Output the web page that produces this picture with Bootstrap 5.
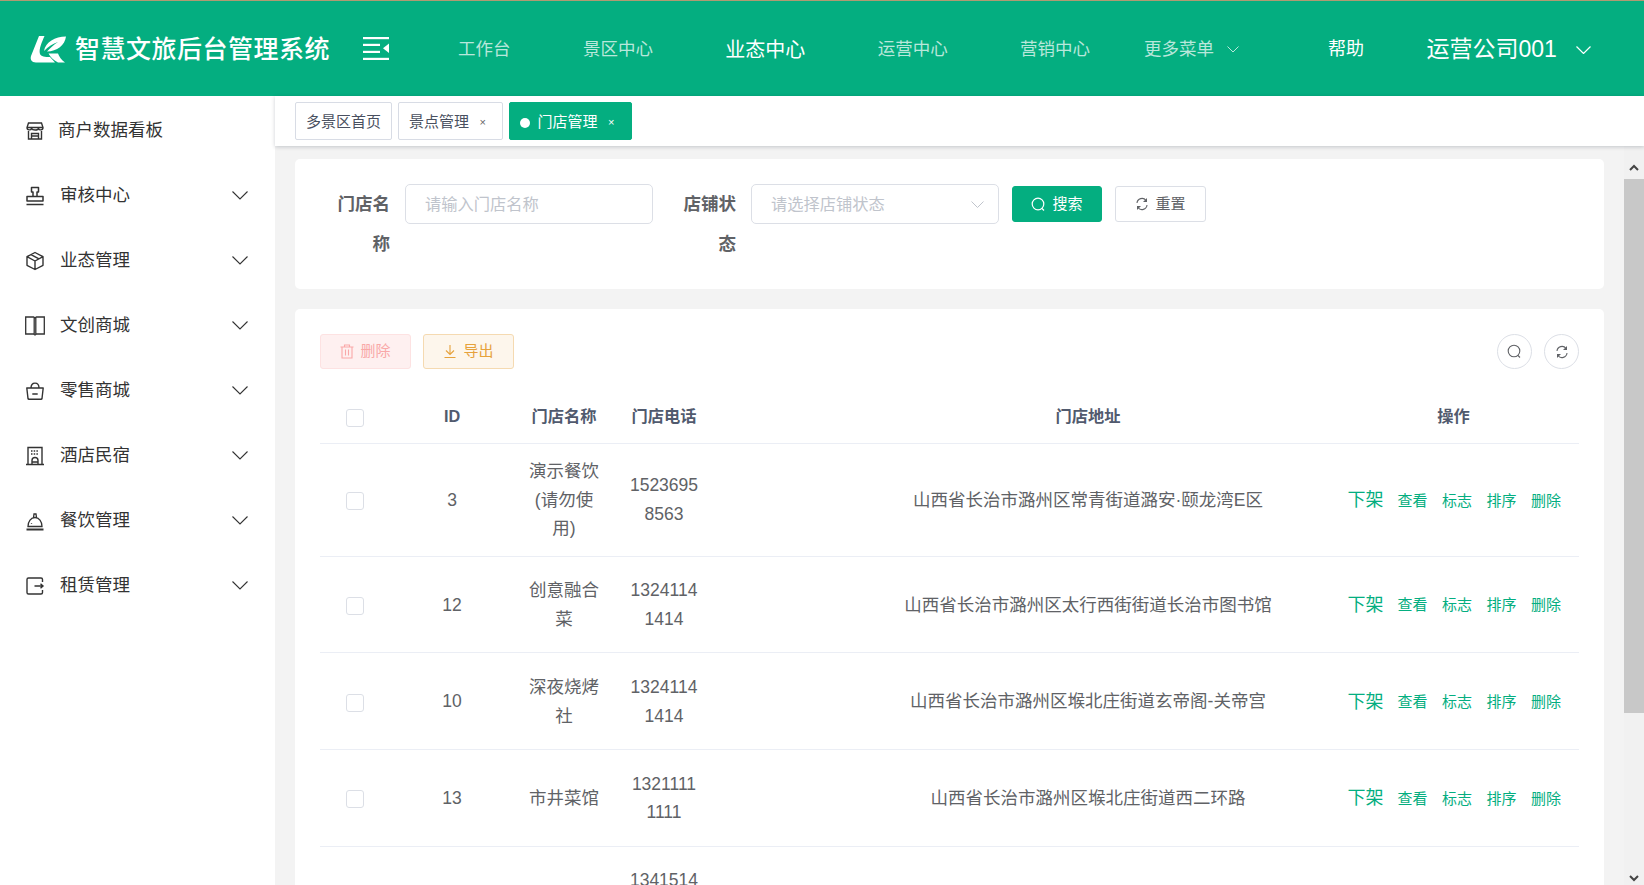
<!DOCTYPE html>
<html lang="zh-CN">
<head>
    <meta charset="UTF-8">
    <meta name="viewport" content="width=device-width, initial-scale=1.0">
    <title>智慧文旅后台管理系统</title>
    <link href="https://cdn.jsdelivr.net/npm/bootstrap@5.3.0/dist/css/bootstrap.min.css" rel="stylesheet">
    <style>
        html, body { height: 100%; }
        body {
            overflow: hidden;
            font-family: "Liberation Sans", "Noto Sans CJK SC", sans-serif;
            font-size: 17.5px;
            color: #606266;
            background: #f3f3f3;
        }
        svg { display: block; flex: none; }

        /* header */
        .top-bar {
            height: 96px;
            flex: none;
            background: #04ae80;
            border-top: 1px solid #b09a72;
            color: #fff;
        }
        .brand-logo { margin-left: 30px; }
        .brand-name { margin-left: 9px; width: 288px; font-size: 25px; font-weight: 500; letter-spacing: .5px; white-space: nowrap; }
        .top-links { margin-left: 69px; gap: 72.4px; }
        .top-links a { color: rgba(255, 255, 255, .72); text-decoration: none; white-space: nowrap; }
        .top-links a.is-on { color: #fff; font-size: 20px; }
        .top-links a.more-link { margin-left: -18.5px; gap: 13px; }
        .help-link { margin-left: 89px; font-size: 18px; }
        .user-link { margin-left: 62.5px; gap: 19px; font-size: 23px; }
        .brand-name, .top-links, .help-link, .user-link { padding-top: 2px; }

        /* left menu */
        .side-menu { width: 275px; flex: none; background: #fff; padding-top: 2px; color: #333; }
        .side-item { height: 65px; padding: 0 27px 0 25px; gap: 15px; }
        .side-item span { font-size: 17.5px; white-space: nowrap; }
        .side-item.is-first { gap: 13px; }

        /* tabs */
        .tab-strip {
            height: 50px;
            flex: none;
            background: #fff;
            padding: 6px 0 0 20px;
            gap: 6px;
            box-shadow: 0 1px 4px rgba(0, 21, 41, .2);
            position: relative;
            z-index: 2;
        }
        .page-tab {
            height: 38px;
            padding: 3px 10px 0;
            border: 1px solid #d8dce5;
            border-radius: 2px;
            font-size: 15px;
            color: #495060;
            white-space: nowrap;
        }
        .page-tab.has-x { padding-right: 16.5px; }
        .page-tab .tab-x { margin-left: 10.5px; font-size: 11px; line-height: 1; color: #666; }
        .page-tab.is-on { background: #04ae80; border-color: #04ae80; color: #fff; }
        .page-tab.is-on .tab-x { color: #fff; }
        .tab-dot { width: 10px; height: 10px; margin-right: 7px; border-radius: 50%; background: #fff; }

        /* content */
        .page-scroll { min-height: 0; }
        .page-body { padding: 13px 20px 0; overflow: hidden; }
        .white-box { background: #fff; border-radius: 5px; }
        .filter-box { height: 130px; padding: 25px 0 0 42px; margin-bottom: 20px; }
        .filter-label { width: 53px; margin-right: 15px; font-weight: 700; line-height: 40px; text-align: right; color: #606266; }
        .filter-input {
            width: 248px;
            height: 40px;
            margin-right: 30px;
            padding: 0 19px;
            border: 1px solid #dcdfe6;
            border-radius: 5px;
            font-size: 16.25px;
            color: #c0c4cc;
        }
        .filter-input::placeholder { color: #c0c4cc; opacity: 1; }
        .filter-input.is-select { margin-right: 13px; }
        .filter-input.is-select svg { margin-right: -5px; }
        .act-btn {
            height: 36px;
            margin-top: 2px;
            padding: 0;
            gap: 6px;
            border-radius: 3px;
            font-size: 15px;
        }
        .act-search { width: 90px; background: #04ae80; border: 1px solid #04ae80; color: #fff; margin-right: 13px; }
        .act-reset { width: 91px; background: #fff; border: 1px solid #dcdfe6; color: #606266; }

        .list-box { padding: 25px; }
        .tool-btn { width: 91px; height: 35px; padding: 0; gap: 6px; border-radius: 3px; font-size: 15px; }
        .tool-del { background: #fef0f0; border: 1px solid #fde2e2; color: #f9a8a8; }
        .tool-out { background: #fdf6ec; border: 1px solid #f5dab1; color: #e6a23c; }
        .round-btn { width: 35px; height: 35px; padding: 0; border: 1px solid #dcdfe6; border-radius: 50%; background: #fff; }

        .shop-table { table-layout: fixed; width: 1259px; margin: 20px 0 0; --bs-table-color: #606266; --bs-table-border-color: #ebeef5; }
        .shop-table th, .shop-table td {
            padding: 1px 12.5px 0;
            text-align: center;
            vertical-align: middle;
            line-height: 28.75px;
            word-break: break-all;
            font-size: 17.5px;
            color: #606266;
        }
        .shop-table th { height: 54px; padding-top: 2px; font-size: 16.25px; font-weight: 700; color: #515a6e; }
        .shop-table td { height: 96.75px; }
        .shop-table tr.is-tall td { height: 113px; }
        .shop-table .form-check-input { width: 18px; height: 18px; margin: 0; border-color: #dcdfe6; border-radius: 3px; vertical-align: middle; }
        .shop-table .addr-cell { padding-left: 134px; padding-right: 0; word-break: normal; white-space: nowrap; }
        .shop-table .op-cell { box-shadow: -6px 0 8px -4px rgba(0, 0, 0, .15); background: #fff; position: relative; }
        .op-links { gap: 14.5px; padding-left: 7px; white-space: nowrap; }
        .op-links a { color: #04ae80; text-decoration: none; font-size: 15px; line-height: 1; }
        .op-links a.is-big { font-size: 18px; font-weight: 400; margin-right: -.5px; }

        /* scrollbar */
        .fake-scroll { width: 20px; flex: none; background: #f1f1f1; }
        .fake-scroll .sb-up { height: 33px; padding-top: 18px; }
        .fake-scroll .sb-thumb { height: 534px; background: #c8c8c8; }
        .fake-scroll .sb-down { height: 10px; }
    </style>
</head>
<body class="d-flex flex-column">

    <!-- header -->
    <header class="top-bar d-flex align-items-center">
        <svg class="brand-logo" width="36" height="28" viewBox="0 0 36 28" fill="#fff">
            <path d="M9 1h5.500C12 7 8.500 14 10 19c.8 2.600 5 3 10 3l5 5.500H6c-4.500 0-6-3-5-6.500z"/>
            <path d="M14 16C15.500 7 25 1.500 36 1.500 35 10 27 16.500 17 16.500c3-3.500 7-7 11-9.500-5 1.500-10 5-14 9z"/>
            <path d="M18.500 18.500H28c1 3 3.500 6.500 7 9h-7c-4-2-7.500-5-9.500-9z"/>
        </svg>
        <div class="brand-name">智慧文旅后台管理系统</div>
        <svg width="26" height="23" viewBox="0 0 26 23" fill="#fff">
            <rect x="0" y="0" width="26" height="2.200"/>
            <rect x="0" y="6.800" width="17" height="2.200"/>
            <rect x="0" y="13.800" width="17" height="2.200"/>
            <rect x="0" y="20.800" width="26" height="2.200"/>
            <path d="M26 6.500v9.500l-6-4.700z"/>
        </svg>
        <nav class="top-links d-flex align-items-center">
            <a href="#">工作台</a>
            <a href="#">景区中心</a>
            <a href="#" class="is-on">业态中心</a>
            <a href="#">运营中心</a>
            <a href="#">营销中心</a>
            <a href="#" class="more-link d-flex align-items-center">更多菜单
                <svg width="12" height="7" viewBox="0 0 12 7" fill="none" stroke="currentColor"><path d="M.5.500l5.500 5.500 5.500-5.500"/></svg>
            </a>
        </nav>
        <div class="help-link">帮助</div>
        <div class="user-link d-flex align-items-center">运营公司001
            <svg width="15" height="8" viewBox="0 0 15 8" fill="none" stroke="#fff" stroke-width="1.200"><path d="M.5.500l7 7 7-7"/></svg>
        </div>
    </header>

    <div class="d-flex flex-grow-1 page-scroll">
        <!-- left menu -->
        <aside class="side-menu">
            <div class="side-item is-first d-flex align-items-center">
                <svg width="20" height="20" viewBox="0 0 20 20" fill="none" stroke="#333" stroke-width="1.400"><path d="M3.500 2h13l1.500 4.500c0 3-4 3-4.500 1-.5 2-6 2-7 0C6 9.500 2 9.500 2 6.500zM2.500 6.500h15M3.500 10v8h13v-8M6.500 18v-5.500h7V18M6.500 15h7"/></svg>
                <span>商户数据看板</span>
            </div>
            <div class="side-item d-flex align-items-center">
                <svg width="20" height="20" viewBox="0 0 20 20" fill="none" stroke="#333" stroke-width="1.500"><path d="M6.500 1.500h7v4.500h-1.500v4.500h-4V6H6.500zM2 10.500h16v4.500H2zM1.500 18.500h17" stroke-linejoin="round"/></svg>
                <span>审核中心</span>
                <svg class="ms-auto" width="16" height="9" viewBox="0 0 16 9" fill="none" stroke="#333" stroke-width="1.100"><path d="M.5.500l7.500 7.500 7.500-7.500"/></svg>
            </div>
            <div class="side-item d-flex align-items-center">
                <svg width="20" height="20" viewBox="0 0 20 20" fill="none" stroke="#333" stroke-width="1.400"><path d="M10 1.500l8 4.200v8.600l-8 4.200-8-4.200V5.700zM2 5.700l8 4.300 8-4.300M10 10v8.500M6 3.600l8 4.300" stroke-linejoin="round"/></svg>
                <span>业态管理</span>
                <svg class="ms-auto" width="16" height="9" viewBox="0 0 16 9" fill="none" stroke="#333" stroke-width="1.100"><path d="M.5.500l7.500 7.500 7.500-7.500"/></svg>
            </div>
            <div class="side-item d-flex align-items-center">
                <svg width="20" height="20" viewBox="0 0 20 20" fill="none" stroke="#333" stroke-width="1.300"><path d="M.7 1h7.800l1.500 .8 1.500-.8h7.800v17h-7.800l-1.500 1-1.500-1H.7zM9.200 1.500v17M10.800 1.500v17"/></svg>
                <span>文创商城</span>
                <svg class="ms-auto" width="16" height="9" viewBox="0 0 16 9" fill="none" stroke="#333" stroke-width="1.100"><path d="M.5.500l7.500 7.500 7.500-7.500"/></svg>
            </div>
            <div class="side-item d-flex align-items-center">
                <svg width="20" height="20" viewBox="0 0 20 20" fill="none" stroke="#333" stroke-width="1.400"><path d="M1.800 7h16.400l-1.200 10.500a1 1 0 0 1-1 .8H4a1 1 0 0 1-1-.8zM6 7c0-6.500 8-6.500 8 0M7.300 13h5.400" stroke-linejoin="round"/></svg>
                <span>零售商城</span>
                <svg class="ms-auto" width="16" height="9" viewBox="0 0 16 9" fill="none" stroke="#333" stroke-width="1.100"><path d="M.5.500l7.500 7.500 7.500-7.500"/></svg>
            </div>
            <div class="side-item d-flex align-items-center">
                <svg width="20" height="20" viewBox="0 0 20 20" fill="none" stroke="#333" stroke-width="1.400"><path d="M3 1.500h14v17H3zM1 18.500h18M7 18.500v-4a3 3 0 0 1 6 0v4h-6M7 16h6"/><path stroke-dasharray="1.500 1.200" d="M6 5h8M6 8h8"/></svg>
                <span>酒店民宿</span>
                <svg class="ms-auto" width="16" height="9" viewBox="0 0 16 9" fill="none" stroke="#333" stroke-width="1.100"><path d="M.5.500l7.500 7.500 7.500-7.500"/></svg>
            </div>
            <div class="side-item d-flex align-items-center">
                <svg width="20" height="20" viewBox="0 0 20 20" fill="none" stroke="#333" stroke-width="1.300"><path d="M3 15.500c0-5 3-9 7-9s7 4 7 9zM8.500 6.500l.5-3.500h2l.5 3.500M6.500 12v.8"/><path stroke-width="2" d="M1.500 18.500h17"/></svg>
                <span>餐饮管理</span>
                <svg class="ms-auto" width="16" height="9" viewBox="0 0 16 9" fill="none" stroke="#333" stroke-width="1.100"><path d="M.5.500l7.500 7.500 7.500-7.500"/></svg>
            </div>
            <div class="side-item d-flex align-items-center">
                <svg width="20" height="20" viewBox="0 0 20 20" fill="none" stroke="#333" stroke-width="1.400"><path d="M17.500 6V3.500a1.500 1.500 0 0 0-1.500-1.500H3.500A1.500 1.500 0 0 0 2 3.500v13A1.500 1.500 0 0 0 3.500 18H16a1.500 1.500 0 0 0 1.500-1.500V14M9.500 10h8.500M15.500 7.800l2.500 2.200-2.500 2.200"/></svg>
                <span>租赁管理</span>
                <svg class="ms-auto" width="16" height="9" viewBox="0 0 16 9" fill="none" stroke="#333" stroke-width="1.100"><path d="M.5.500l7.500 7.500 7.500-7.500"/></svg>
            </div>
        </aside>

        <main class="d-flex flex-column flex-grow-1" style="min-width: 0">
            <!-- tabs -->
            <div class="tab-strip d-flex">
                <div class="page-tab d-flex align-items-center">多景区首页</div>
                <div class="page-tab has-x d-flex align-items-center">景点管理<span class="tab-x">×</span></div>
                <div class="page-tab has-x is-on d-flex align-items-center"><span class="tab-dot"></span>门店管理<span class="tab-x">×</span></div>
            </div>

            <div class="d-flex flex-grow-1 page-scroll">
                <div class="page-body flex-grow-1">
                    <!-- filters -->
                    <div class="white-box filter-box d-flex align-items-start">
                        <div class="filter-label">门店名称</div>
                        <input class="filter-input" type="text" placeholder="请输入门店名称">
                        <div class="filter-label">店铺状态</div>
                        <div class="filter-input is-select d-flex align-items-center justify-content-between">
                            <span>请选择店铺状态</span>
                            <svg width="13" height="7" viewBox="0 0 13 7" fill="none" stroke="#c0c4cc"><path d="M.5.500l6 6 6-6"/></svg>
                        </div>
                        <button class="btn act-btn act-search d-flex align-items-center justify-content-center">
                            <svg width="15" height="15" viewBox="0 0 15 15" fill="none" stroke="#fff" stroke-width="1.200"><circle cx="7" cy="7" r="5.800"/><path d="M11 11.500l2 2"/></svg>
                            搜索
                        </button>
                        <button class="btn act-btn act-reset d-flex align-items-center justify-content-center">
                            <svg width="14" height="14" viewBox="0 0 14 14" fill="none" stroke="#606266" stroke-width="1.100"><path d="M2 6a5 5 0 0 1 9-2.500M12 8a5 5 0 0 1-9 2.500"/><path fill="#606266" stroke="none" d="M12 1v4H8zM2 13V9h4z"/></svg>
                            重置
                        </button>
                    </div>

                    <!-- list -->
                    <div class="white-box list-box">
                        <div class="d-flex gap-2 align-items-center">
                            <button class="btn tool-btn tool-del d-flex align-items-center justify-content-center">
                                <svg width="14" height="15" viewBox="0 0 14 15" fill="none" stroke="#f9a8a8" stroke-width="1.100"><path d="M.5 3h13M4.500 3V1h5v2M2 3v11h10V3M5.500 5.500v6M8.500 5.500v6"/></svg>
                                删除
                            </button>
                            <button class="btn tool-btn tool-out d-flex align-items-center justify-content-center" style="margin-left: 4px">
                                <svg width="14" height="15" viewBox="0 0 14 15" fill="none" stroke="#e6a23c" stroke-width="1.100"><path d="M7 1v9M3 6.500l4 4 4-4M1.500 13.500h11"/></svg>
                                导出
                            </button>
                            <button class="btn round-btn ms-auto d-flex align-items-center justify-content-center">
                                <svg width="15" height="15" viewBox="0 0 15 15" fill="none" stroke="#606266" stroke-width="1.100"><circle cx="7" cy="7" r="5.800"/><path d="M11 11.500l2 2"/></svg>
                            </button>
                            <button class="btn round-btn d-flex align-items-center justify-content-center" style="margin-left: 4px">
                                <svg width="14" height="14" viewBox="0 0 14 14" fill="none" stroke="#606266" stroke-width="1.100"><path d="M2 6a5 5 0 0 1 9-2.500M12 8a5 5 0 0 1-9 2.500"/><path fill="#606266" stroke="none" d="M12 1v4H8zM2 13V9h4z"/></svg>
                            </button>
                        </div>

                        <table class="table shop-table">
                            <colgroup>
                                <col style="width: 70px">
                                <col style="width: 124px">
                                <col style="width: 100px">
                                <col style="width: 100px">
                                <col style="width: 614px">
                                <col style="width: 251px">
                            </colgroup>
                            <thead>
                                <tr>
                                    <th><input class="form-check-input" type="checkbox"></th>
                                    <th>ID</th>
                                    <th>门店名称</th>
                                    <th>门店电话</th>
                                    <th class="addr-cell">门店地址</th>
                                    <th class="op-cell">操作</th>
                                </tr>
                            </thead>
                            <tbody>
                                <tr class="is-tall">
                                    <td><input class="form-check-input" type="checkbox"></td>
                                    <td>3</td>
                                    <td>演示餐饮(请勿使用)</td>
                                    <td>1523695<br>8563</td>
                                    <td class="addr-cell">山西省长治市潞州区常青街道潞安·颐龙湾E区</td>
                                    <td class="op-cell"><div class="op-links d-flex align-items-center"><a class="is-big" href="#">下架</a><a href="#">查看</a><a href="#">标志</a><a href="#">排序</a><a href="#">删除</a></div></td>
                                </tr>
                                <tr>
                                    <td><input class="form-check-input" type="checkbox"></td>
                                    <td>12</td>
                                    <td>创意融合菜</td>
                                    <td>1324114<br>1414</td>
                                    <td class="addr-cell">山西省长治市潞州区太行西街街道长治市图书馆</td>
                                    <td class="op-cell"><div class="op-links d-flex align-items-center"><a class="is-big" href="#">下架</a><a href="#">查看</a><a href="#">标志</a><a href="#">排序</a><a href="#">删除</a></div></td>
                                </tr>
                                <tr>
                                    <td><input class="form-check-input" type="checkbox"></td>
                                    <td>10</td>
                                    <td>深夜烧烤社</td>
                                    <td>1324114<br>1414</td>
                                    <td class="addr-cell">山西省长治市潞州区堠北庄街道玄帝阁-关帝宫</td>
                                    <td class="op-cell"><div class="op-links d-flex align-items-center"><a class="is-big" href="#">下架</a><a href="#">查看</a><a href="#">标志</a><a href="#">排序</a><a href="#">删除</a></div></td>
                                </tr>
                                <tr>
                                    <td><input class="form-check-input" type="checkbox"></td>
                                    <td>13</td>
                                    <td>市井菜馆</td>
                                    <td>1321111<br>1111</td>
                                    <td class="addr-cell">山西省长治市潞州区堠北庄街道西二环路</td>
                                    <td class="op-cell"><div class="op-links d-flex align-items-center"><a class="is-big" href="#">下架</a><a href="#">查看</a><a href="#">标志</a><a href="#">排序</a><a href="#">删除</a></div></td>
                                </tr>
                                <tr>
                                    <td></td>
                                    <td></td>
                                    <td></td>
                                    <td>1341514<br>1414</td>
                                    <td class="addr-cell"></td>
                                    <td class="op-cell"></td>
                                </tr>
                            </tbody>
                        </table>
                    </div>
                </div>

                <!-- page scrollbar -->
                <div class="fake-scroll d-flex flex-column align-items-stretch">
                    <div class="sb-up d-flex justify-content-center">
                        <svg width="10" height="7" viewBox="0 0 10 7" fill="none" stroke="#444" stroke-width="2"><path d="M1 6l4-4 4 4"/></svg>
                    </div>
                    <div class="sb-thumb"></div>
                    <div class="flex-grow-1"></div>
                    <div class="sb-down d-flex justify-content-center">
                        <svg width="10" height="7" viewBox="0 0 10 7" fill="none" stroke="#444" stroke-width="2"><path d="M1 1l4 4 4-4"/></svg>
                    </div>
                </div>
            </div>
        </main>
    </div>

    <script src="https://cdn.jsdelivr.net/npm/bootstrap@5.3.0/dist/js/bootstrap.bundle.min.js"></script>
</body>
</html>
